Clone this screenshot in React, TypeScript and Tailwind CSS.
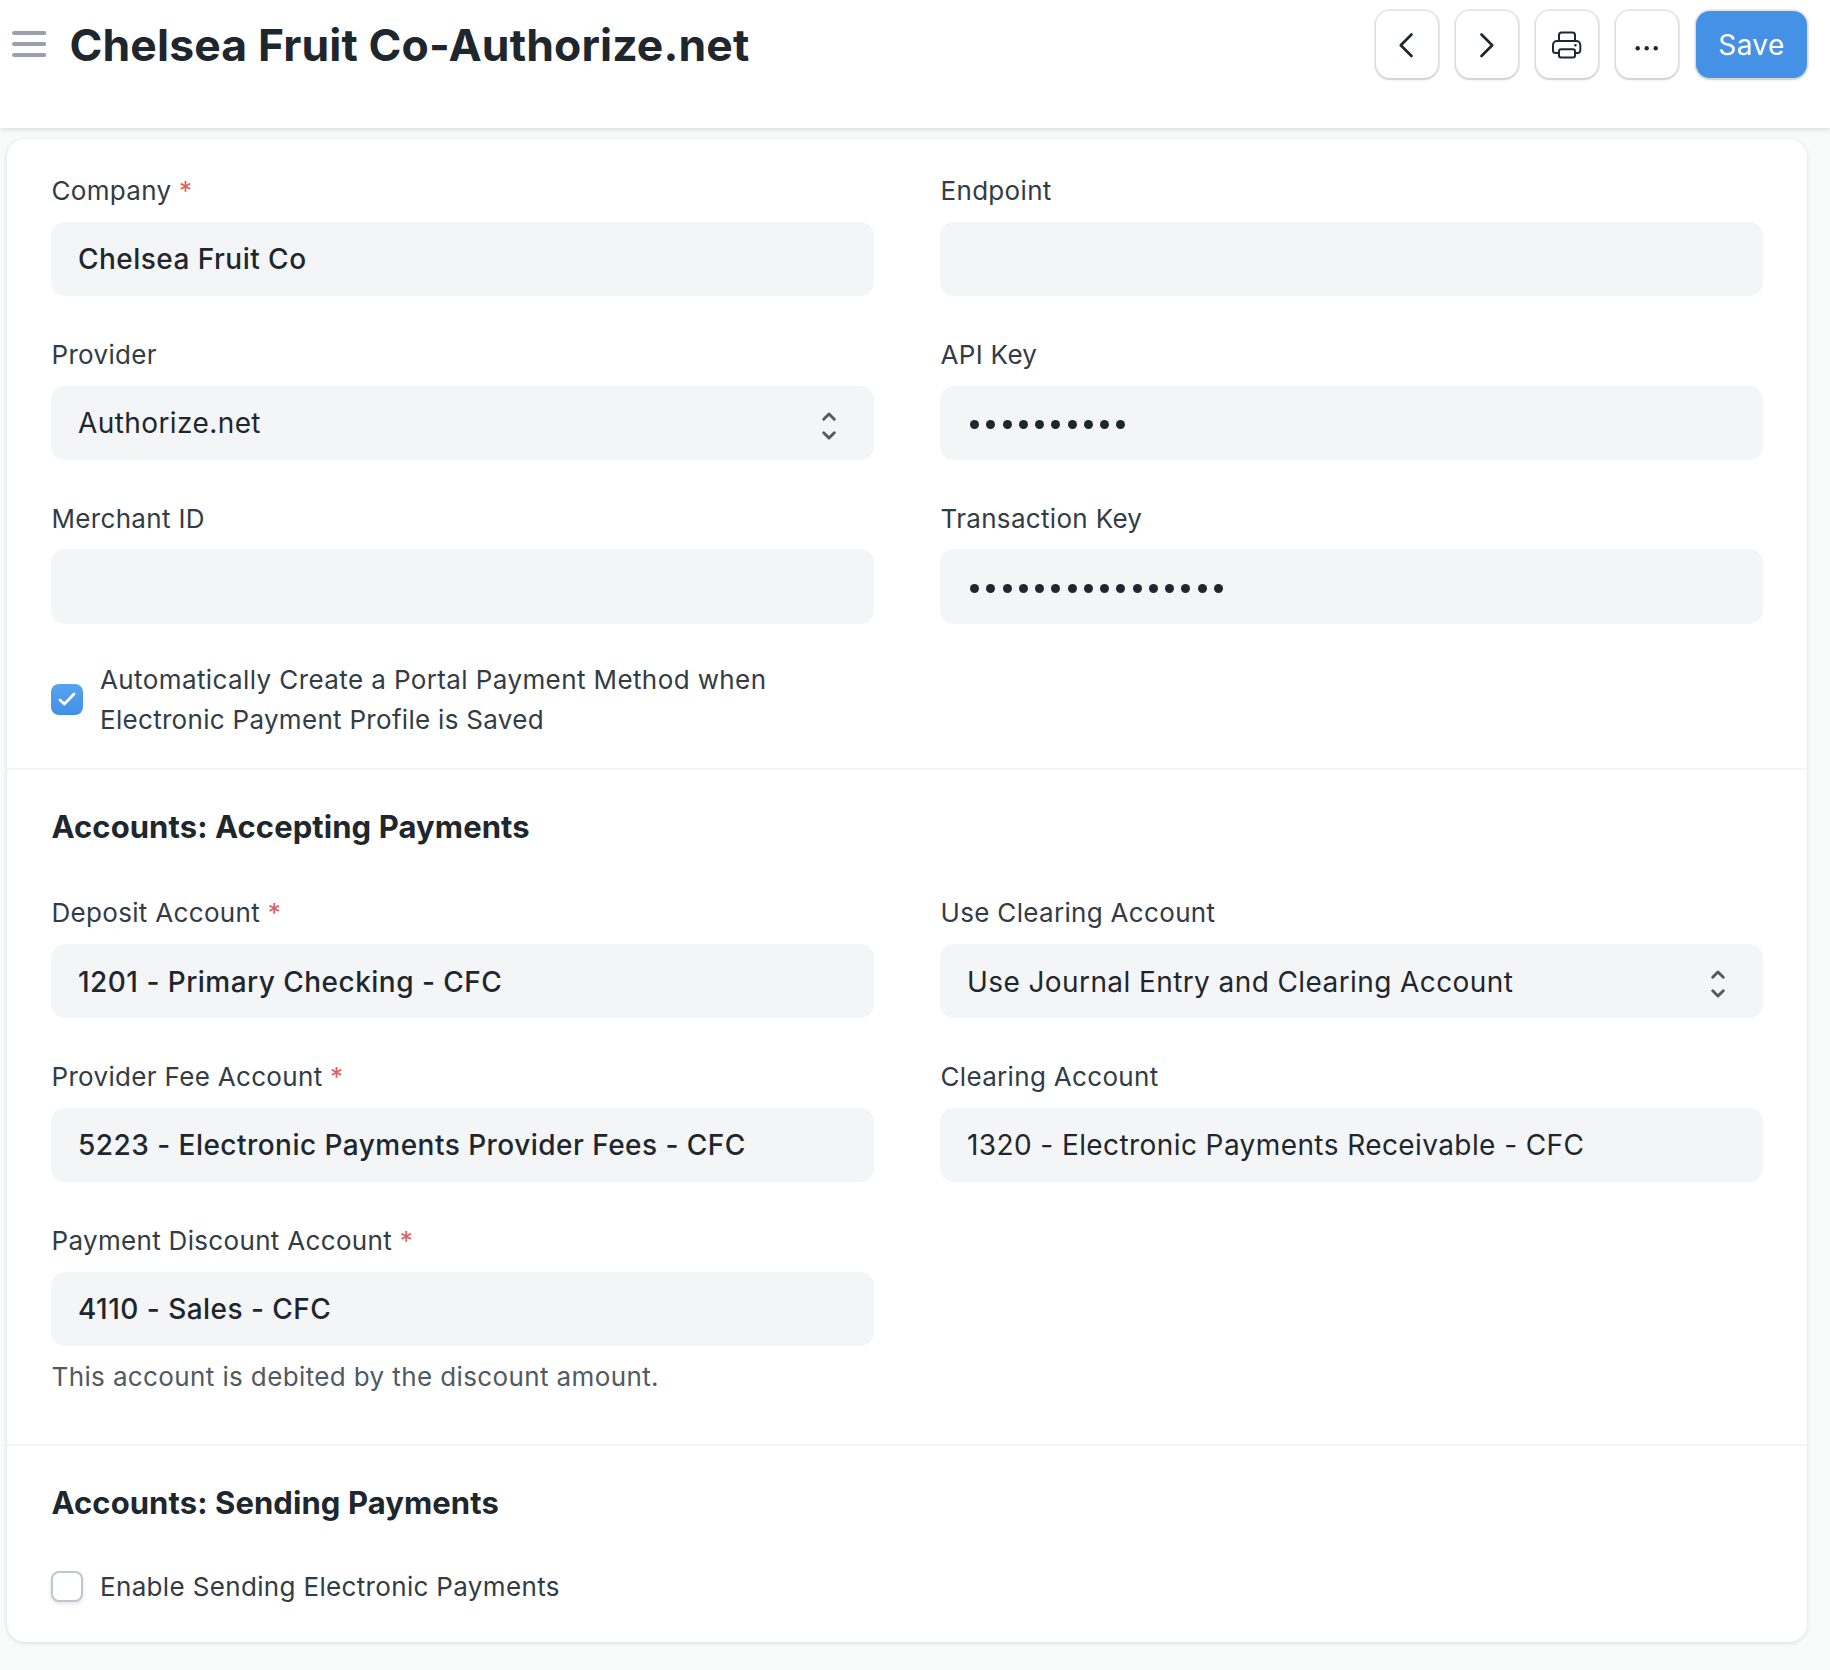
import React from "react";

function Label({ text, required }: { text: string; required?: boolean }) {
  return (
    <div className="h-[42px] pl-[0.5px] text-[26px] leading-[42px] tracking-[0.32px] text-[#333c44] whitespace-pre">
      {text}
      {required && <span className="text-[#e0605a]"> *</span>}
    </div>
  );
}

function SelectArrows() {
  return (
    <svg className="w-4 h-8 mr-[37px] mt-[5px]" viewBox="0 0 16 32" fill="none" stroke="#505a62" strokeWidth="2.9" strokeLinecap="round" strokeLinejoin="round">
      <path d="M2.7 9.300 8 4l5.300 5.300M2.700 22.700 8 28l5.300-5.300" />
    </svg>
  );
}

type FieldProps = {
  label: string;
  value?: string;
  required?: boolean;
  select?: boolean;
  secret?: number;
  last?: boolean;
  low?: boolean;
};

function Field({ label, value, required, select, secret, last, low }: FieldProps) {
  return (
    <div className="flex flex-col">
      <Label text={label} required={required} />
      <div className={"flex items-center justify-between rounded-[14px] bg-[#f4f5f6] pl-[27px] text-[28px] leading-[40px] text-[#1f272e] " + (last ? "h-[75px] mt-[9px] " : "h-[74px] mt-[10px] ") + (required ? "font-medium tracking-[0.47px]" : "tracking-[0.41px]")}>
        {secret ? (
          <div className={"flex gap-[7.28px] pl-[3px] " + (last ? "pt-[4px]" : "pt-[2.5px]")}>
            {Array.from({ length: secret }, (_, i) => (
              <span key={i} className="size-[9px] rounded-full bg-[#1f272e]" />
            ))}
          </div>
        ) : (
          <span className={low ? "pt-[2px]" : ""}>{value}</span>
        )}
        {select && <SelectArrows />}
      </div>
    </div>
  );
}

function IconButton({ children }: { children: React.ReactNode }) {
  return (
    <button className="flex h-[67px] w-[62px] items-center justify-center rounded-[14px] bg-white shadow-[0_0_0_2px_rgba(0,0,0,0.09),0_2px_3px_rgba(0,0,0,0.11)]">
      {children}
    </button>
  );
}

export default function App() {
  return (
    <div className="h-[1670px] w-[1830px] overflow-hidden bg-[#f9fafa] font-['Inter',sans-serif]">
      <header className="relative flex h-32 items-start bg-white pl-3 pr-[23px] pt-[11px] shadow-[0_1px_5px_rgba(25,39,52,0.16)]">
        <svg className="mt-[19px] h-7 w-[34px]" viewBox="0 0 34 28" stroke="#98a1a9" strokeWidth="4" strokeLinecap="round">
          <path d="M2 3h30.300M2 14h30.300M2 25h30.300" />
        </svg>
        <h1 className="ml-[23.5px] text-[44.5px] font-bold leading-[68px] tracking-[0.12px] text-[#1f272e]">Chelsea Fruit Co-Authorize.net</h1>
        <div className="ml-auto flex gap-[18px]">
          <IconButton>
            <svg width="32" height="32" viewBox="0 0 32 32" fill="none" stroke="#1f272e" strokeWidth="2.7" strokeLinecap="round" strokeLinejoin="round"><path d="M20.500 5.500 9.800 16.300 20.500 27" /></svg>
          </IconButton>
          <IconButton>
            <svg width="32" height="32" viewBox="0 0 32 32" fill="none" stroke="#1f272e" strokeWidth="2.7" strokeLinecap="round" strokeLinejoin="round"><path d="M10.500 5.500 21.200 16.300 10.500 27" /></svg>
          </IconButton>
          <IconButton>
            <svg width="32" height="32" viewBox="0 0 32 32" fill="none" stroke="#1f272e" strokeWidth="2" strokeLinejoin="round">
              <path d="M8 11.500V6a2.500 2.500 0 0 1 2.500-2.500h11A2.500 2.500 0 0 1 24 6v5.500M8 24H4.500A2.500 2.500 0 0 1 2 21.500V16a4 4 0 0 1 4-4h19.300a4 4 0 0 1 4 4v5.500a2.500 2.500 0 0 1-2.500 2.500H24" />
              <rect x="8" y="20.200" width="16" height="8.300" rx="2" />
              <circle cx="24.400" cy="16.200" r="1.200" fill="#1f272e" stroke="none" />
            </svg>
          </IconButton>
          <IconButton>
            <svg width="32" height="32" viewBox="0 0 32 32" fill="#1f272e"><circle cx="6.700" cy="19.200" r="2.200" /><circle cx="15.700" cy="19.200" r="2.200" /><circle cx="24.700" cy="19.200" r="2.200" /></svg>
          </IconButton>
          <button className="h-[67px] w-[111px] rounded-[14px] bg-[#4591e6] text-[28px] tracking-[0.4px] text-white shadow-[0_0_0_2px_rgba(0,0,0,0.09),0_2px_3px_rgba(0,0,0,0.11)]">Save</button>
        </div>
      </header>

      <main className="ml-[7px] mt-[11px] h-[1503px] w-[1800px] rounded-[18px] bg-white shadow-[0_1px_4px_rgba(25,39,52,0.14)]">
        <section className="h-[631px] border-b-2 border-[#f4f5f6] px-11 pt-[31px]">
          <div className="grid grid-cols-2 auto-rows-[164px] gap-x-[66px]">
            <Field label="Company" value="Chelsea Fruit Co" required />
            <Field label="Endpoint" />
            <Field label="Provider" value="Authorize.net" select />
            <Field label="API Key" secret={10} />
            <Field label="Merchant ID" last />
            <Field label="Transaction Key" secret={16} last />
          </div>
          <div className="flex items-center gap-[17px] -mt-[2px]">
            <div className="mb-[2px] flex h-[31px] w-8 items-center justify-center rounded-[8px] bg-gradient-to-b from-[#57a3ee] to-[#4190e8]">
              <svg width="18" height="14" viewBox="0 0 18 14" fill="none" stroke="white" strokeWidth="2.8" strokeLinecap="round" strokeLinejoin="round"><path d="m2 8 4.300 4L16 2" /></svg>
            </div>
            <p className="text-[26px] leading-[40px] tracking-[0.3px] text-[#333c44]">
              <span className="tracking-[0.4px]">Automatically Create a Portal Payment Method when</span>
              <br />
              Electronic Payment Profile is Saved
            </p>
          </div>
        </section>

        <section className="h-[676px] border-b-2 border-[#f4f5f6] px-11 pt-[35px]">
          <h2 className="h-[87px] pl-[0.5px] text-[31px] font-bold leading-[44px] tracking-[0.08px] text-[#1f272e]">Accounts: Accepting Payments</h2>
          <div className="grid grid-cols-2 auto-rows-[164px] gap-x-[66px]">
            <Field label="Deposit Account" value="1201 - Primary Checking - CFC" required low />
            <Field label="Use Clearing Account" value="Use Journal Entry and Clearing Account" select low />
            <Field label="Provider Fee Account" value="5223 - Electronic Payments Provider Fees - CFC" required />
            <Field label="Clearing Account" value="1320 - Electronic Payments Receivable - CFC" />
            <Field label="Payment Discount Account" value="4110 - Sales - CFC" required />
          </div>
          <p className="-mt-[27px] pl-[0.5px] text-[26px] leading-[40px] tracking-[0.38px] text-[#505a62]">This account is debited by the discount amount.</p>
        </section>

        <section className="px-11 pt-[35px]">
          <h2 className="h-[86px] pl-[0.5px] text-[31px] font-bold leading-[44px] tracking-[0.08px] text-[#1f272e]">Accounts: Sending Payments</h2>
          <div className="flex items-center gap-[17px]">
            <div className="mb-[2px] h-[31px] w-8 rounded-[8px] border-2 border-[#c0c6cc] bg-white shadow-[0_2px_4px_rgba(0,0,0,0.1)]" />
            <span className="text-[26px] leading-[40px] tracking-[0.34px] text-[#333c44]">Enable Sending Electronic Payments</span>
          </div>
        </section>
      </main>
    </div>
  );
}
